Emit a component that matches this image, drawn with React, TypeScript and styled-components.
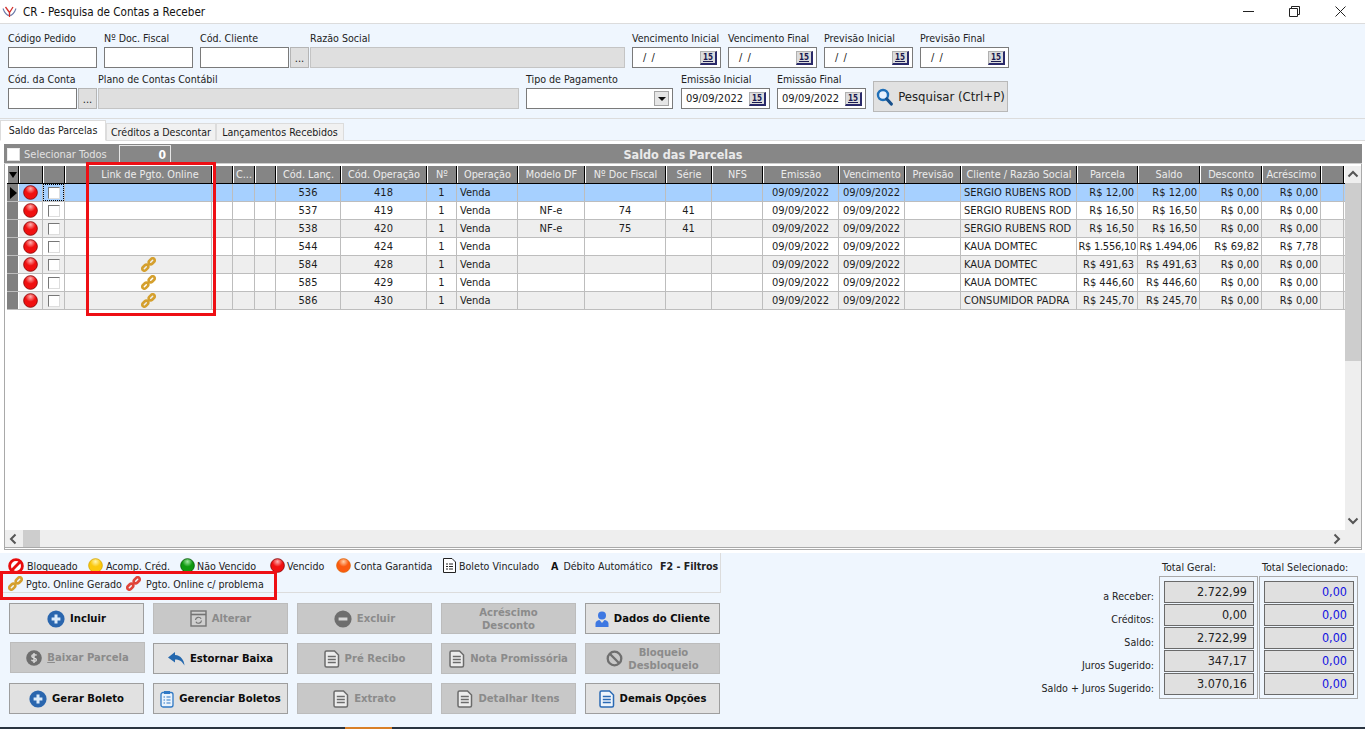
import React from "react";
import styled, { createGlobalStyle } from "styled-components";

const FONT = `"DejaVu Sans Condensed", "DejaVu Sans", sans-serif`;

const Global = createGlobalStyle`
  html, body { margin: 0; padding: 0; background: #fff; }
  body { font-family: ${FONT}; font-size: 10.6px; color: #1a1a1a; }
  * { box-sizing: border-box; }
`;

const COLS = [12, 24, 22, 23, 124, 21, 22, 21, 65, 86, 30, 61, 67, 81, 46, 51, 76, 66, 56, 116, 61, 62, 62, 59, 23];
const TEMPLATE = COLS.map((c) => `${c}px`).join(" ");

const Page = styled.div`
  position: relative;
  width: 1365px;
  height: 729px;
  overflow: hidden;
  display: flex;
  flex-direction: column;
  background: #fff;
`;

const TitleBar = styled.div`
  height: 23px;
  display: flex;
  align-items: center;
  padding-left: 2px;
  gap: 6px;
  font-size: 11.6px;
  color: #111;
`;
const TitleText = styled.span`
  flex: 1;
`;
const WinButtons = styled.div`
  display: flex;
  align-items: center;
  margin-right: 19px;
  gap: 35px;
`;

const FilterPanel = styled.div`
  height: 96px;
  background: #eff6fe;
  border-top: 1px solid #dcdcdc;
  border-bottom: 1px solid #dcdcdc;
  padding: 6px 0 0 8px;
  display: flex;
  flex-direction: column;
  gap: 3px;
`;
const FilterRow = styled.div`
  display: flex;
  align-items: flex-end;
`;
const Field = styled.div<{ $w: number; $ml?: number }>`
  width: ${(p) => p.$w}px;
  margin-left: ${(p) => p.$ml ?? 0}px;
  display: flex;
  flex-direction: column;
  flex: none;
`;
const FieldLabel = styled.label`
  height: 17px;
  line-height: 16px;
  white-space: nowrap;
  color: #222;
`;
const InputBox = styled.div<{ $disabled?: boolean }>`
  height: 21px;
  border: 1px solid ${(p) => (p.$disabled ? "#c4c4c4" : "#7a7a7a")};
  background: ${(p) => (p.$disabled ? "#dfdfdf" : "#fff")};
  display: flex;
  align-items: center;
  padding: 0 3px;
  justify-content: space-between;
  white-space: nowrap;
`;
const DotsButton = styled.div<{ $w?: number }>`
  width: ${(p) => p.$w ?? 19}px;
  height: 21px;
  flex: none;
  margin-left: 1px;
  background: #dfdfdf;
  border: 1px solid #b5b5b5;
  font-size: 11px;
  text-align: center;
  line-height: 22px;
`;
const DateText = styled.span<{ $empty?: boolean }>`
  padding-left: ${(p) => (p.$empty ? 7 : 1)}px;
  letter-spacing: ${(p) => (p.$empty ? "1px" : "0")};
  font-size: 11px;
`;
const CalButton = styled.span`
  width: 17px;
  height: 14px;
  margin-right: 0;
  background: #dcdcdc;
  border: 1px solid #b0b0b0;
  border-right: 2px solid #2a2a6a;
  border-bottom: 2px solid #2a2a6a;
  font-size: 8px;
  font-weight: 700;
  line-height: 11px;
  text-align: center;
  color: #1a1a50;
  text-decoration: underline;
  flex: none;
`;
const ComboArrow = styled.span`
  width: 15px;
  height: 15px;
  border: 1px solid #a5a5a5;
  background: #e6e6e6;
  display: flex;
  align-items: center;
  justify-content: center;
  &::after {
    content: "";
    border-left: 4px solid transparent;
    border-right: 4px solid transparent;
    border-top: 4px solid #111;
  }
`;
const SearchButton = styled.div`
  width: 135px;
  height: 31px;
  margin: 0 0 -3px 7px;
  flex: none;
  background: #e1e1e1;
  border: 1px solid #b8b8b8;
  display: flex;
  align-items: center;
  justify-content: center;
  gap: 5px;
  font-size: 13px;
  color: #222;
`;

const TabStrip = styled.div`
  height: 22px;
  background: #eff6fe;
  border-bottom: 1px solid #dcdcdc;
  display: flex;
  align-items: flex-end;
`;
const Tab = styled.div<{ $active?: boolean; $w: number }>`
  width: ${(p) => p.$w}px;
  height: ${(p) => (p.$active ? 21 : 18)}px;
  background: ${(p) => (p.$active ? "#fff" : "#f1f1f1")};
  border: 1px solid #dcdcdc;
  border-bottom: ${(p) => (p.$active ? "1px solid #fff" : "1px solid #dcdcdc")};
  margin-bottom: -1px;
  text-align: center;
  line-height: ${(p) => (p.$active ? 18 : 17)}px;
  white-space: nowrap;
`;

const GridFrame = styled.div`
  height: 412px;
  padding: 3px 3px 0 4px;
  background: #fff;
  display: flex;
  flex-direction: column;
`;
const Band = styled.div`
  height: 20px;
  background: #878787;
  display: grid;
  grid-template-columns: 1fr auto 1fr;
  align-items: center;
  flex: none;
  border-bottom: 1px solid #cfcfcf;
`;
const BandLeft = styled.div`
  display: flex;
  align-items: center;
  padding-left: 3px;
`;
const SelectAll = styled.span`
  color: #e2e2e2;
  margin-left: 4px;
  width: 95px;
  font-size: 11px;
`;
const CountBox = styled.div`
  width: 52px;
  height: 19px;
  margin-top: 1px;
  border: 1px solid #e6e6e6;
  border-bottom: none;
  text-align: right;
  padding-right: 4px;
  font-weight: 700;
  color: #fff;
  font-size: 12px;
  line-height: 19px;
`;
const BandTitle = styled.div`
  color: #eaeaea;
  font-weight: 700;
  font-size: 12.5px;
`;
const GridBody = styled.div`
  height: 386px;
  flex: none;
  display: grid;
  grid-template-columns: 1fr 16px;
  grid-template-rows: 1fr 17px;
  border: 1px solid #a9a9a9;
  border-top: none;
  border-bottom: 3px double #a9a9a9;
  background: #fff;
`;
const TableArea = styled.div`
  padding: 2px 0 0 2px;
  overflow: hidden;
`;
const HeaderRow = styled.div`
  display: grid;
  grid-template-columns: ${TEMPLATE};
  height: 18px;
  border-bottom: 1px solid #000;
`;
const HeadCell = styled.div`
  background: #858585;
  border-right: 1px solid #000;
  border-left: 1px solid #fff;
  color: #ececec;
  font-size: 10.8px;
  line-height: 17px;
  white-space: nowrap;
  overflow: hidden;
  display: flex;
  align-items: center;
  justify-content: center;
`;
const Row = styled.div<{ $bg: string }>`
  display: grid;
  grid-template-columns: ${TEMPLATE};
  height: 18px;
  background: ${(p) => p.$bg};
  border-bottom: 1px solid #bdbdbd;
`;
const Cell = styled.div<{ $align?: string; $pad?: number; $tight?: boolean }>`
  border-right: 1px solid #bdbdbd;
  padding: 0 ${(p) => p.$pad ?? 0}px;
  font-size: 11px;
  letter-spacing: ${(p) => (p.$tight ? "-0.25px" : "0")};
  line-height: 17px;
  white-space: nowrap;
  overflow: hidden;
  color: #1c1c1c;
  display: flex;
  align-items: center;
  justify-content: ${(p) => (p.$align === "right" ? "flex-end" : p.$align === "left" ? "flex-start" : "center")};
`;
const RowHead = styled.div`
  background: #808080;
  border-right: 1px solid #fff;
  display: flex;
  align-items: center;
  justify-content: center;
`;
const Triangle = styled.span`
  border-top: 6px solid transparent;
  border-bottom: 6px solid transparent;
  border-left: 7px solid #000;
  margin-left: 2px;
`;
const TriangleDown = styled.span`
  border-left: 4px solid transparent;
  border-right: 4px solid transparent;
  border-top: 6px solid #000;
`;
const CheckFocus = styled.span<{ $focus?: boolean }>`
  width: 100%;
  height: 100%;
  display: flex;
  align-items: center;
  justify-content: center;
  outline: ${(p) => (p.$focus ? "1px dotted #000" : "none")};
  outline-offset: -1px;
`;
const Check = styled.span<{ $white?: boolean }>`
  display: block;
  width: ${(p) => (p.$white ? 13 : 12)}px;
  height: ${(p) => (p.$white ? 13 : 12)}px;
  background: #fff;
  border: 1px solid ${(p) => (p.$white ? "#eee" : "#777")};
  border-right-color: #ddd;
  border-bottom-color: #ddd;
`;
const LinkSlot = styled.span`
  display: flex;
  margin-right: 3px;
`;
const VScroll = styled.div`
  grid-row: 1;
  grid-column: 2;
  margin-top: 2px;
  background: #eeeeee;
  display: flex;
  flex-direction: column;
  align-items: center;
  padding: 3px 0 4px;
`;
const VThumb = styled.div`
  width: 100%;
  height: 178px;
  background: #cdcdcd;
  margin: 2px 0 auto;
`;
const HScroll = styled.div`
  grid-row: 2;
  grid-column: 1;
  background: #eeeeee;
  display: flex;
  align-items: center;
  padding: 0 2px 0 3px;
`;
const HThumb = styled.div`
  width: 17px;
  height: 17px;
  background: #cdcdcd;
  margin-left: 3px;
  margin-right: auto;
`;
const Corner = styled.div`
  grid-row: 2;
  grid-column: 2;
  background: #eeeeee;
`;

const Bottom = styled.div`
  flex: 1;
  background: #eff6fe;
  display: flex;
  min-height: 0;
`;
const BottomLeft = styled.div`
  width: 721px;
  flex: none;
`;
const Legend = styled.div`
  height: 40px;
  border-right: 1px solid #dcdcdc;
  border-bottom: 1px solid #dcdcdc;
  padding: 3px 0 0 8px;
  display: flex;
  flex-direction: column;
`;
const LegendRow = styled.div`
  display: flex;
  height: 18px;
  align-items: center;
  margin-top: 1px;
`;
const LegendItem = styled.div<{ $w: number; $gap?: number; $bold?: boolean }>`
  width: ${(p) => p.$w}px;
  flex: none;
  display: flex;
  align-items: center;
  gap: ${(p) => p.$gap ?? 3}px;
  white-space: nowrap;
  font-weight: ${(p) => (p.$bold ? 700 : 400)};
  color: #222;
`;
const BoldA = styled.b`
  color: #111;
  margin-right: 2px;
`;
const ButtonGrid = styled.div`
  display: grid;
  grid-template-columns: repeat(5, 135px);
  grid-auto-rows: 31px;
  gap: 9px;
  padding: 10px 0 0 9px;
`;
const ActionButton = styled.div<{ $off?: boolean; $nudge?: boolean }>`
  background: ${(p) => (p.$off ? "#c8c8c8" : "#e1e1e1")};
  border: 1px solid ${(p) => (p.$off ? "#bcbcbc" : "#9e9e9e")};
  color: ${(p) => (p.$off ? "#8b8b8b" : "#0c0c0c")};
  font-weight: 700;
  font-size: 11.2px;
  line-height: 13px;
  display: flex;
  align-items: center;
  justify-content: center;
  gap: 5px;
  text-align: center;
  white-space: nowrap;
  ${(p) => (p.$nudge ? "transform: translate(1px, -1px);" : "")}
`;
const Underlined = styled.span`
  text-decoration: underline;
`;

const Totals = styled.div`
  margin-left: auto;
  margin-right: 7px;
  display: grid;
  grid-template-columns: 124px 99px 99px;
  grid-template-rows: 17px auto;
  column-gap: 1px;
  padding-top: 6px;
  height: fit-content;
`;
const TotalHead = styled.div`
  padding: 2px 0 0 3px;
  color: #222;
  white-space: nowrap;
`;
const TotalLabels = styled.div`
  padding-top: 9px;
  padding-right: 4px;
  display: flex;
  flex-direction: column;
  align-items: flex-end;
`;
const TotalLabel = styled.div`
  height: 23px;
  line-height: 23px;
  white-space: nowrap;
  color: #222;
`;
const TotalGroup = styled.div`
  border: 1px solid #a9a9a9;
  padding: 4px 3px 2px 4px;
  height: 123px;
  display: flex;
  flex-direction: column;
  gap: 1px;
`;
const TotalCell = styled.div<{ $blue?: boolean }>`
  height: 22px;
  background: #e0e0e0;
  border: 1px solid #6a6a6a;
  text-align: right;
  padding-right: 6px;
  line-height: 19px;
  font-size: 12.5px;
  color: ${(p) => (p.$blue ? "#1212e0" : "#222")};
`;
const FooterLine = styled.div`
  height: 2px;
  flex: none;
  background: #2a3440;
  display: flex;
`;
const FooterAccent = styled.span`
  width: 47px;
  margin-left: 345px;
  background: #d98028;
`;
const RedBox = styled.div<{ $x: number; $y: number; $w: number; $h: number }>`
  position: absolute;
  left: ${(p) => p.$x}px;
  top: ${(p) => p.$y}px;
  width: ${(p) => p.$w}px;
  height: ${(p) => p.$h}px;
  border: 3px solid #ee0f14;
  pointer-events: none;
`;

const Ball = ({ c = "red", s = 15 }: { c?: "red" | "yellow" | "green" | "orange"; s?: number }) => {
  const map = {
    red: ["#ffb0b0", "#f01010", "#8a0000"],
    yellow: ["#fff6b0", "#fbc80c", "#d8a800"],
    green: ["#9fe89f", "#0f9a0f", "#045a04"],
    orange: ["#ffd0a8", "#fb5a10", "#e06000"],
  }[c];
  const id = `ball-${c}`;
  return (
    <svg width={s} height={s} viewBox="0 0 16 16" style={{ flex: "none" }}>
      <defs>
        <radialGradient id={id} cx="50%" cy="22%" r="62%">
          <stop offset="0%" stopColor={map[0]} />
          <stop offset="60%" stopColor={map[1]} />
          <stop offset="100%" stopColor={map[1]} />
        </radialGradient>
      </defs>
      <circle cx="8" cy="8" r="7.3" fill={`url(#${id})`} stroke={map[2]} strokeWidth="0.9" />
    </svg>
  );
};

const Chain = ({ color = "#d5a02e", s = 15 }: { color?: string; s?: number }) => (
  <svg width={s} height={s} viewBox="0 0 16 16" style={{ flex: "none" }}>
    <g fill="none" stroke={color} strokeWidth="2.8">
      <rect x="-3.7" y="-2.2" width="7.4" height="4.4" rx="2.2" transform="translate(4.6 11.4) rotate(-45)" />
      <rect x="-3.7" y="-2.2" width="7.4" height="4.4" rx="2.2" transform="translate(11.4 4.6) rotate(-45)" />
    </g>
    <path d="M6.3 9.7 9.7 6.3" stroke={color} strokeWidth="2.4" />
  </svg>
);

const Magnifier = () => (
  <svg width="17" height="18" viewBox="0 0 17 18" style={{ flex: "none" }}>
    <circle cx="7" cy="7" r="5" fill="#eaf3ff" stroke="#1f6fb8" strokeWidth="2.4" />
    <path d="M10.8 11 15.3 16" stroke="#17508c" strokeWidth="3.2" strokeLinecap="round" />
  </svg>
);

const PlusCircle = () => (
  <svg width="18" height="18" viewBox="0 0 18 18" style={{ flex: "none" }}>
    <circle cx="9" cy="9" r="8.6" fill="#2a66ae" />
    <path d="M9 4.6v8.8M4.6 9h8.8" stroke="#dcebfa" strokeWidth="3" />
  </svg>
);
const MinusCircle = () => (
  <svg width="18" height="18" viewBox="0 0 18 18" style={{ flex: "none" }}>
    <circle cx="9" cy="9" r="8.6" fill="#6e6e6e" />
    <path d="M4.6 9h8.8" stroke="#d6d6d6" strokeWidth="3" />
  </svg>
);
const Dollar = () => (
  <svg width="16" height="16" viewBox="0 0 16 16" style={{ flex: "none" }}>
    <circle cx="8" cy="8" r="7.8" fill="#6e6e6e" />
    <path d="M10.6 5.4C10 4.4 6 4.2 5.8 6c-.2 2.2 4.8 1.6 4.6 4-.2 1.8-4.2 1.6-5-.2M8 3v10" fill="none" stroke="#dcdcdc" strokeWidth="1.4" />
  </svg>
);
const EditWin = () => (
  <svg width="17" height="17" viewBox="0 0 17 17" style={{ flex: "none" }}>
    <rect x="1" y="1" width="15" height="15" fill="#cfcfcf" stroke="#737373" strokeWidth="1.4" />
    <path d="M1 4.5h15" stroke="#737373" strokeWidth="1.6" />
    <path d="M5.5 10a3 3 0 0 1 5.6-1.2M11.5 10.5a3 3 0 0 1-5.6 1.2" fill="none" stroke="#737373" strokeWidth="1.2" />
  </svg>
);
const DocIcon = ({ color = "#6b6b6b", fill = "#ececec" }: { color?: string; fill?: string }) => (
  <svg width="16" height="18" viewBox="0 0 16 18" style={{ flex: "none" }}>
    <path d="M2.5 1h8l4 4v10.5a1.5 1.5 0 0 1-1.5 1.5H2.500a1.500 1.500 0 0 1-1.500-1.500V2.500A1.500 1.500 0 0 1 2.500 1Z" fill={fill} stroke={color} strokeWidth="1.5" />
    <path d="M3.800 6.500h8M3.800 9.500h8M3.800 12.500h8" stroke={color} strokeWidth="1.400" />
  </svg>
);
const Clipboard = () => (
  <svg width="14" height="18" viewBox="0 0 14 18" style={{ flex: "none" }}>
    <rect x="1" y="2.500" width="12" height="14.500" rx="2" fill="#eaf3fc" stroke="#2f78c4" strokeWidth="1.300" />
    <rect x="4" y="1" width="6" height="3" fill="#2f78c4" />
    <path d="M3.500 7h1.500M6.500 7h4M3.500 10h1.500M6.500 10h4M3.500 13h1.500M6.500 13h4" stroke="#2f78c4" strokeWidth="1.200" />
  </svg>
);
const UndoArrow = () => (
  <svg width="17" height="14" viewBox="0 0 17 14" style={{ flex: "none" }}>
    <path d="M7 0 0 5.500 7 10.500V7.500c4 0 7 1.500 9.500 6C16 8 13 3.500 7 3Z" fill="#2468ae" />
  </svg>
);
const Person = () => (
  <svg width="14" height="16" viewBox="0 0 14 16" style={{ flex: "none" }}>
    <circle cx="7" cy="4.500" r="4" fill="#3e78e2" />
    <path d="M0.500 16V12.500c0-2.300 2.500-3.500 4-3.500l2.500 3 2.500-3c1.500 0 4 1.200 4 3.500V16Z" fill="#3e78e2" />
  </svg>
);
const Ban = ({ s = 17, color = "#6f6f6f", w = 2.3, strong = false }: { s?: number; color?: string; w?: number; strong?: boolean }) => (
  <svg width={s} height={s} viewBox="0 0 17 17" style={{ flex: "none" }}>
    <circle cx="8.500" cy="8.500" r="6.800" fill={strong ? "#fff" : "none"} stroke={color} strokeWidth={w} />
    <path d="M3.800 13.200 13.200 3.800" stroke={color} strokeWidth={w} />
  </svg>
);
const BanGray = () => (
  <svg width="17" height="17" viewBox="0 0 17 17" style={{ flex: "none" }}>
    <circle cx="8.500" cy="8.500" r="6.800" fill="none" stroke="#6f6f6f" strokeWidth="2.300" />
    <path d="M3.800 3.800l9.400 9.400" stroke="#6f6f6f" strokeWidth="2.300" />
  </svg>
);
const SmallDoc = () => (
  <svg width="13" height="15" viewBox="0 0 13 15" style={{ flex: "none" }}>
    <path d="M0.500 0.500h8.500l3.500 3.500v10.500H0.500Z" fill="#fff" stroke="#222" />
    <path d="M3 6h2M6 6h4M3 8.500h2M6 8.500h4M3 11h2M6 11h4" stroke="#222" />
  </svg>
);
const Logo = () => (
  <svg width="15" height="12" viewBox="0 0 15 12" style={{ flex: "none" }}>
    <path d="M1 2.500C3 8 5.500 9.500 7.500 9.500S12 8 14 2.500" fill="none" stroke="#6a78a8" strokeWidth="1.100" />
    <path d="M3.500 1 7.500 6.500 11 1M7.500 6.500V11" fill="none" stroke="#d4302c" strokeWidth="1.300" />
  </svg>
);
const Chevron = ({ dir }: { dir: "up" | "down" | "left" | "right" }) => {
  const d = {
    up: "M1.500 7.500 6 3 10.500 7.500",
    down: "M1.500 4.500 6 9 10.500 4.500",
    left: "M7.500 1.500 3 6 7.500 10.500",
    right: "M3.500 1.500 8 6 3.500 10.500",
  }[dir];
  return (
    <svg width="12" height="12" viewBox="0 0 12 12" style={{ flex: "none" }}>
      <path d={d} fill="none" stroke="#555" strokeWidth="2" />
    </svg>
  );
};

const DateField = ({ label, w = 89, ml = 0, value }: { label: string; w?: number; ml?: number; value?: string }) => (
  <Field $w={w} $ml={ml}>
    <FieldLabel>{label}</FieldLabel>
    <InputBox>
      <DateText $empty={!value}>{value ?? "/ /"}</DateText>
      <CalButton>15</CalButton>
    </InputBox>
  </Field>
);

const HEADS = ["", "", "", "", "Link de Pgto. Online", "", "C...", "", "Cód. Lanç.", "Cód. Operação", "Nº", "Operação", "Modelo DF", "Nº Doc Fiscal", "Série", "NFS", "Emissão", "Vencimento", "Previsão", "Cliente / Razão Social", "Parcela", "Saldo", "Desconto", "Acréscimo", ""];

type RowData = { lanc: string; op: string; df?: string; doc?: string; serie?: string; cli: string; parc: string; saldo: string; desc: string; acr: string; link?: boolean };
const ROWS: RowData[] = [
  { lanc: "536", op: "418", cli: "SERGIO RUBENS ROD", parc: "R$ 12,00", saldo: "R$ 12,00", desc: "R$ 0,00", acr: "R$ 0,00" },
  { lanc: "537", op: "419", df: "NF-e", doc: "74", serie: "41", cli: "SERGIO RUBENS ROD", parc: "R$ 16,50", saldo: "R$ 16,50", desc: "R$ 0,00", acr: "R$ 0,00" },
  { lanc: "538", op: "420", df: "NF-e", doc: "75", serie: "41", cli: "SERGIO RUBENS ROD", parc: "R$ 16,50", saldo: "R$ 16,50", desc: "R$ 0,00", acr: "R$ 0,00" },
  { lanc: "544", op: "424", cli: "KAUA DOMTEC", parc: "R$ 1.556,10", saldo: "R$ 1.494,06", desc: "R$ 69,82", acr: "R$ 7,78" },
  { lanc: "584", op: "428", cli: "KAUA DOMTEC", parc: "R$ 491,63", saldo: "R$ 491,63", desc: "R$ 0,00", acr: "R$ 0,00", link: true },
  { lanc: "585", op: "429", cli: "KAUA DOMTEC", parc: "R$ 446,60", saldo: "R$ 446,60", desc: "R$ 0,00", acr: "R$ 0,00", link: true },
  { lanc: "586", op: "430", cli: "CONSUMIDOR PADRA", parc: "R$ 245,70", saldo: "R$ 245,70", desc: "R$ 0,00", acr: "R$ 0,00", link: true },
];

const TOTALS = ["2.722,99", "0,00", "2.722,99", "347,17", "3.070,16"];
const TOTAL_LABELS = ["a Receber:", "Créditos:", "Saldo:", "Juros Sugerido:", "Saldo + Juros Sugerido:"];

export default function App() {
  return (
    <Page>
      <Global />
      <TitleBar>
        <Logo />
        <TitleText>CR - Pesquisa de Contas a Receber</TitleText>
        <WinButtons>
          <svg width="11" height="11" viewBox="0 0 11 11"><path d="M0 5.500h11" stroke="#222" /></svg>
          <svg width="11" height="11" viewBox="0 0 11 11"><path d="M0.500 2.500h8v8h-8ZM2.500 2.500v-2h8v8h-2" fill="none" stroke="#222" /></svg>
          <svg width="11" height="11" viewBox="0 0 11 11"><path d="M0.500 0.500l10 10M10.500 0.500l-10 10" stroke="#222" /></svg>
        </WinButtons>
      </TitleBar>

      <FilterPanel>
        <FilterRow>
          <Field $w={89}><FieldLabel>Código Pedido</FieldLabel><InputBox /></Field>
          <Field $w={89} $ml={7}><FieldLabel>Nº Doc. Fiscal</FieldLabel><InputBox /></Field>
          <Field $w={89} $ml={7}><FieldLabel>Cód. Cliente</FieldLabel><InputBox /></Field>
          <DotsButton>...</DotsButton>
          <Field $w={315} $ml={1}><FieldLabel>Razão Social</FieldLabel><InputBox $disabled /></Field>
          <DateField label="Vencimento Inicial" ml={7} />
          <DateField label="Vencimento Final" ml={7} />
          <DateField label="Previsão Inicial" ml={7} />
          <DateField label="Previsão Final" ml={7} />
        </FilterRow>
        <FilterRow>
          <Field $w={69}><FieldLabel>Cód. da Conta</FieldLabel><InputBox /></Field>
          <DotsButton>...</DotsButton>
          <Field $w={421} $ml={1}><FieldLabel>Plano de Contas Contábil</FieldLabel><InputBox $disabled /></Field>
          <Field $w={147} $ml={7}><FieldLabel>Tipo de Pagamento</FieldLabel><InputBox><span /><ComboArrow /></InputBox></Field>
          <DateField label="Emissão Inicial" ml={8} value="09/09/2022" />
          <DateField label="Emissão Final" ml={7} value="09/09/2022" />
          <SearchButton><Magnifier />Pesquisar (Ctrl+P)</SearchButton>
        </FilterRow>
      </FilterPanel>

      <TabStrip>
        <Tab $active $w={106}>Saldo das Parcelas</Tab>
        <Tab $w={110}>Créditos a Descontar</Tab>
        <Tab $w={128}>Lançamentos Recebidos</Tab>
      </TabStrip>

      <GridFrame>
        <Band>
          <BandLeft>
            <Check $white />
            <SelectAll>Selecionar Todos</SelectAll>
            <CountBox>0</CountBox>
          </BandLeft>
          <BandTitle>Saldo das Parcelas</BandTitle>
          <span />
        </Band>
        <GridBody>
          <TableArea>
            <HeaderRow>
              {HEADS.map((h, i) => (
                <HeadCell key={i}>{i === 0 ? <TriangleDown /> : h}</HeadCell>
              ))}
            </HeaderRow>
            {ROWS.map((r, i) => (
              <Row key={r.lanc} $bg={i === 0 ? "#a6d0ff" : i % 2 === 0 ? "#eeeeee" : "#ffffff"}>
                <RowHead>{i === 0 && <Triangle />}</RowHead>
                <Cell><Ball /></Cell>
                <Cell><CheckFocus $focus={i === 0}><Check /></CheckFocus></Cell>
                <Cell />
                <Cell>{r.link && <LinkSlot><Chain /></LinkSlot>}</Cell>
                <Cell />
                <Cell />
                <Cell />
                <Cell>{r.lanc}</Cell>
                <Cell>{r.op}</Cell>
                <Cell>1</Cell>
                <Cell $align="left" $pad={3}>Venda</Cell>
                <Cell>{r.df}</Cell>
                <Cell>{r.doc}</Cell>
                <Cell>{r.serie}</Cell>
                <Cell />
                <Cell>09/09/2022</Cell>
                <Cell>09/09/2022</Cell>
                <Cell />
                <Cell $align="left" $pad={3}>{r.cli}</Cell>
                <Cell $align="right" $pad={r.parc.length > 10 ? 1 : 3} $tight={r.parc.length > 10}>{r.parc}</Cell>
                <Cell $align="right" $pad={2} $tight={r.saldo.length > 10}>{r.saldo}</Cell>
                <Cell $align="right" $pad={2}>{r.desc}</Cell>
                <Cell $align="right" $pad={2}>{r.acr}</Cell>
                <Cell />
              </Row>
            ))}
          </TableArea>
          <VScroll>
            <Chevron dir="up" />
            <VThumb />
            <Chevron dir="down" />
          </VScroll>
          <HScroll>
            <Chevron dir="left" />
            <HThumb />
            <Chevron dir="right" />
          </HScroll>
          <Corner />
        </GridBody>
      </GridFrame>

      <Bottom>
        <BottomLeft>
          <Legend>
            <LegendRow>
              <LegendItem $w={80}><Ban s={16} color="#e80c0c" w={3} strong />Bloqueado</LegendItem>
              <LegendItem $w={92}><Ball c="yellow" />Acomp. Créd.</LegendItem>
              <LegendItem $w={90} $gap={2}><Ball c="green" />Não Vencido</LegendItem>
              <LegendItem $w={66} $gap={2}><Ball />Vencido</LegendItem>
              <LegendItem $w={107}><Ball c="orange" />Conta Garantida</LegendItem>
              <LegendItem $w={108}><SmallDoc />Boleto Vinculado</LegendItem>
              <LegendItem $w={109}><BoldA>A</BoldA>Débito Automático</LegendItem>
              <LegendItem $w={60} $bold>F2 - Filtros</LegendItem>
            </LegendRow>
            <LegendRow>
              <LegendItem $w={118}><Chain />Pgto. Online Gerado</LegendItem>
              <LegendItem $w={140} $gap={5}><Chain color="#e0443a" />Pgto. Online c/ problema</LegendItem>
            </LegendRow>
          </Legend>
          <ButtonGrid>
            <ActionButton><PlusCircle />Incluir</ActionButton>
            <ActionButton $off><EditWin />Alterar</ActionButton>
            <ActionButton $off><MinusCircle />Excluir</ActionButton>
            <ActionButton $off>Acréscimo<br />Desconto</ActionButton>
            <ActionButton><Person />Dados do Cliente</ActionButton>

            <ActionButton $off $nudge><Dollar /><span><Underlined>B</Underlined>aixar Parcela</span></ActionButton>
            <ActionButton><UndoArrow />Estornar Baixa</ActionButton>
            <ActionButton $off><DocIcon />Pré Recibo</ActionButton>
            <ActionButton $off><DocIcon />Nota Promissória</ActionButton>
            <ActionButton $off><BanGray />Bloqueio<br />Desbloqueio</ActionButton>

            <ActionButton><PlusCircle />Gerar Boleto</ActionButton>
            <ActionButton><Clipboard />Gerenciar Boletos</ActionButton>
            <ActionButton $off><DocIcon />Extrato</ActionButton>
            <ActionButton $off><DocIcon />Detalhar Itens</ActionButton>
            <ActionButton><DocIcon color="#2a6ab4" fill="#eef5fc" />Demais Opções</ActionButton>
          </ButtonGrid>
        </BottomLeft>
        <Totals>
          <span />
          <TotalHead>Total Geral:</TotalHead>
          <TotalHead>Total Selecionado:</TotalHead>
          <TotalLabels>
            {TOTAL_LABELS.map((l) => <TotalLabel key={l}>{l}</TotalLabel>)}
          </TotalLabels>
          <TotalGroup>
            {TOTALS.map((t, i) => <TotalCell key={i}>{t}</TotalCell>)}
          </TotalGroup>
          <TotalGroup>
            {TOTALS.map((_, i) => <TotalCell key={i} $blue>0,00</TotalCell>)}
          </TotalGroup>
        </Totals>
      </Bottom>
      <FooterLine><FooterAccent /></FooterLine>

      <RedBox $x={86} $y={162} $w={130} $h={154} />
      <RedBox $x={0} $y={571} $w={277} $h={29} />
    </Page>
  );
}
